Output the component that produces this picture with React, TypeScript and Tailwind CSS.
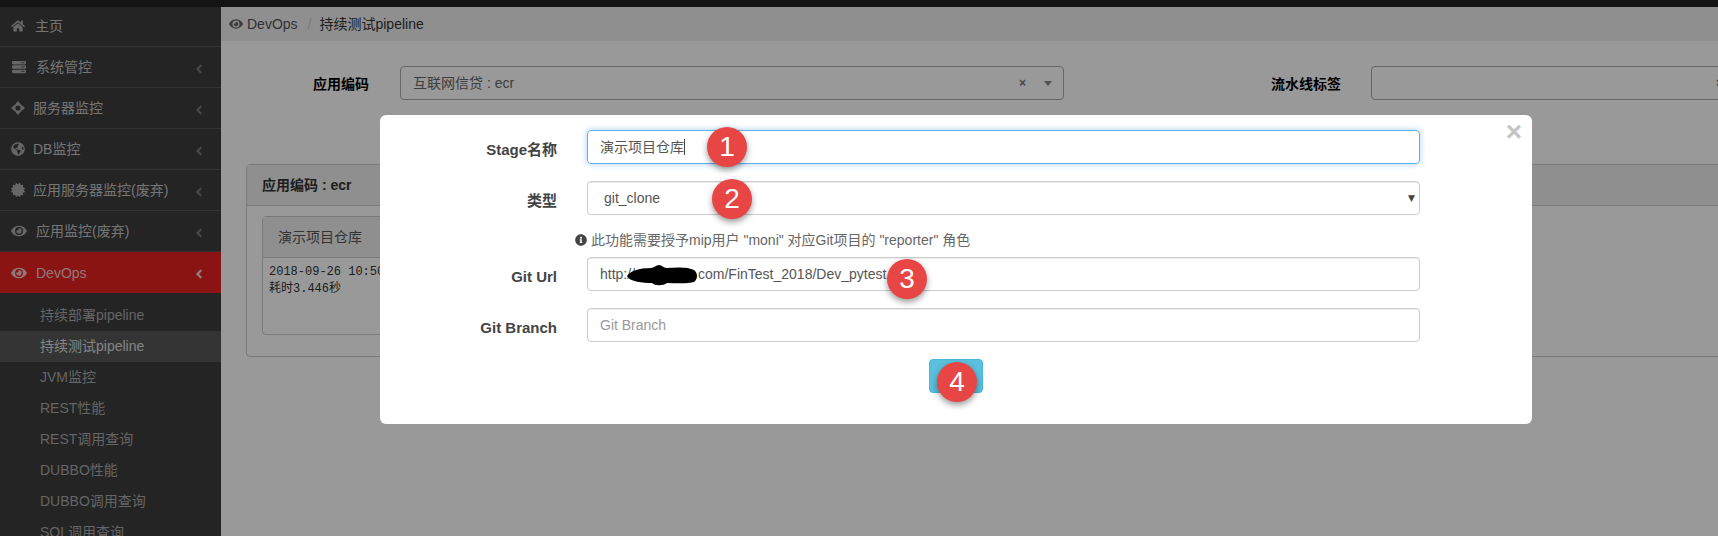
import type { ReactNode } from 'react';
import { FaAngleLeft, FaCertificate, FaEye, FaGlobeAmericas, FaHome, FaInfoCircle, FaServer } from 'react-icons/fa';

const font = 'font-["Liberation_Sans","Noto_Sans_CJK_SC",sans-serif]';

// the "move" glyph of the server item: ring with four points
function MoveIcon() {
    return (
        <svg className="w-[14px] h-[14px]" viewBox="0 0 14 14" fill="currentColor">
            <path d="M7 0 L9.5 3 L4.5 3 Z M7 14 L4.5 11 L9.5 11 Z M0 7 L3 4.5 L3 9.5 Z M14 7 L11 9.5 L11 4.5 Z" />
            <circle cx="7" cy="7" r="3.6" fill="none" stroke="currentColor" strokeWidth="2" />
        </svg>
    );
}

const menu = [
    { label: '主页', icon: <FaHome className="w-[14px] h-[14px]" />, gap: 'ml-[10px]', arrow: false },
    { label: '系统管控', icon: <FaServer className="w-[16px] h-[14px]" />, gap: 'ml-[9px]', arrow: true },
    { label: '服务器监控', icon: <MoveIcon />, gap: 'ml-[8px]', arrow: true },
    { label: 'DB监控', icon: <FaGlobeAmericas className="w-[14px] h-[14px]" />, gap: 'ml-[8px]', arrow: true },
    { label: '应用服务器监控(废弃)', icon: <FaCertificate className="w-[14px] h-[14px]" />, gap: 'ml-[8px]', arrow: true },
    { label: '应用监控(废弃)', icon: <FaEye className="w-[16px] h-[14px]" />, gap: 'ml-[9px]', arrow: true },
];

const subMenu = ['持续部署pipeline', '持续测试pipeline', 'JVM监控', 'REST性能', 'REST调用查询', 'DUBBO性能', 'DUBBO调用查询', 'SQL调用查询'];

function Sidebar() {
    return (
        <aside className="w-[221px] shrink-0 bg-[#3c3c3c] text-sm text-[#c4c4c4]">
            {menu.map((item) => (
                <div key={item.label} className="flex h-[41px] first:h-[40px] items-center pl-[11px] pr-[16px] border-b border-[#555] first:pb-[1px]">
                    <span className="text-[#aaa]">{item.icon}</span>
                    <span className={item.gap}>{item.label}</span>
                    {item.arrow && <FaAngleLeft className="ml-auto mt-[3px] w-[12px] h-[14px] text-[#777]" />}
                </div>
            ))}
            <div className="flex h-[41px] items-center pl-[11px] pr-[16px] bg-[#e62222] text-[#f0c8c8]">
                <FaEye className="w-[16px] h-[14px]" />
                <span className="ml-[9px]">DevOps</span>
                <FaAngleLeft className="ml-auto mt-[3px] w-[12px] h-[14px] text-[#f4d4d4]" />
            </div>
            <ul className="pt-[7px]">
                {subMenu.map((name, i) => (
                    <li key={name} className={`h-[31px] leading-[31px] pl-[40px] ${i === 1 ? 'bg-[#585858] text-[#ddd]' : 'text-[#a8a8a8]'}`}>
                        {name}
                    </li>
                ))}
            </ul>
        </aside>
    );
}

function Content() {
    return (
        <main className="flex-1 min-w-0 overflow-hidden text-sm text-[#444]">
            <div className="flex h-[34px] items-center bg-[#eeeeee] pl-[8px]">
                <FaEye className="w-[14px] h-[14px] text-[#666]" />
                <span className="ml-[4px] text-[#555]">DevOps</span>
                <span className="ml-[10px] text-[#ccc]">/</span>
                <span className="ml-[8px] text-[#333]">持续测试pipeline</span>
            </div>
            <div className="mt-[25px] flex items-center w-[1600px]">
                <label className="w-[148px] pt-[2px] text-right font-bold text-black">应用编码</label>
                <div className="ml-[31px] flex h-[34px] w-[664px] items-center rounded border border-[#aaa] pl-[12px] pr-[11px] text-[#666]">
                    <span>互联网信贷 : ecr</span>
                    <span className="ml-auto text-[#777] font-bold text-xs">×</span>
                    <span className="ml-[18px] h-0 w-0 border-x-[4px] border-t-[5px] border-x-transparent border-t-[#888]"></span>
                </div>
                <label className="w-[277px] pt-[2px] text-right font-bold text-black">流水线标签</label>
                <div className="ml-[30px] flex h-[34px] w-[400px] shrink-0 items-center rounded border border-[#aaa] pl-[344px] text-[#777] font-bold text-xs">×</div>
            </div>
            <section className="mt-[64px] ml-[25px] w-[1500px] rounded border border-[#ccc] h-[193px]">
                <div className="flex h-[41px] items-center bg-[#eeeeee] border-b border-[#ccc] pl-[15px] font-bold text-[#333]">应用编码 : ecr</div>
                <div className="ml-[15px] mt-[10px] w-[240px] h-[119px] rounded border border-[#ccc]">
                    <div className="flex h-[41px] items-center bg-[#eeeeee] border-b border-[#ccc] pl-[15px] text-[#555]">演示项目仓库</div>
                    <pre className='pl-[6px] pt-[6px] text-xs leading-[17px] text-[#333] font-["Liberation_Mono","Noto_Sans_CJK_SC",monospace]'>{'2018-09-26 10:50:21\n耗时3.446秒'}</pre>
                </div>
            </section>
        </main>
    );
}

function Field({ label, children, focused }: { label: string; children: ReactNode; focused?: boolean }) {
    return (
        <div className="flex items-center">
            <label className="w-[177px] pt-[6px] text-right text-[15px] font-bold text-[#444]">{label}</label>
            <div className={`ml-[30px] flex h-[34px] w-[833px] items-center rounded border px-[12px] text-[#555] ${focused ? 'border-[#66afe9] shadow-[0_0_6px_rgba(102,175,233,0.6)]' : 'border-[#ccc] shadow-[inset_0_1px_1px_rgba(0,0,0,0.075)]'}`}>
                {children}
            </div>
        </div>
    );
}

function Badge({ n, className }: { n: number; className: string }) {
    return (
        <span className={`absolute flex h-[40px] w-[40px] items-center justify-center rounded-full bg-[#e84545] text-[28px] text-white shadow-[0_3px_6px_rgba(0,0,0,0.4)] ${className}`}>
            {n}
        </span>
    );
}

function Modal() {
    return (
        <div className="absolute left-[380px] top-[115px] h-[309px] w-[1152px] rounded-md bg-white pt-[15px] text-sm">
            <span className="absolute right-[10px] top-[1px] text-[28px] leading-[32px] font-bold text-[#c4c4c4]">×</span>
            <div className="flex flex-col gap-[17px]">
                <Field label="Stage名称" focused>
                    <span>演示项目仓库</span>
                    <span className="h-[16px] w-px bg-[#444]"></span>
                </Field>
                <Field label="类型">
                    <span className="pl-[4px]">git_clone</span>
                    <span className='ml-auto -mr-[8px] text-[9px] text-[#444] font-["DejaVu_Sans",sans-serif]'>▼</span>
                </Field>
            </div>
            <p className="mt-[16px] flex h-[17px] items-center pl-[195px] text-[#666]">
                <FaInfoCircle className="w-[12px] h-[12px] text-[#444]" />
                <span className="ml-[4px]">此功能需要授予mip用户 "moni" 对应Git项目的 "reporter" 角色</span>
            </p>
            <div className="mt-[9px] flex flex-col gap-[17px]">
                <Field label="Git Url">
                    <span>http://</span>
                    <span className="w-[63px]"></span>
                    <span>com/FinTest_2018/Dev_pytest</span>
                </Field>
                <Field label="Git Branch">
                    <input readOnly placeholder="Git Branch" className="w-full outline-none placeholder:text-[#999]" />
                </Field>
            </div>
            <button className="mt-[17px] ml-[549px] block h-[34px] w-[54px] rounded bg-[#5bc0de] border border-[#46b8da]"></button>

            {/* scribble hiding the host name */}
            <svg className="absolute left-[247px] top-[150px]" width="71" height="21" viewBox="0 0 71 21">
                <path d="M0 11 C3 6 12 3 24 3 C27 3 29 0 32 0 C35 0 36 3 40 3 C50 2 62 2 67 5 C71 8 71 14 67 17 C60 19 50 18 40 18 C36 21 28 21 25 18 C16 18 3 17 0 11 Z" fill="#000" />
            </svg>

            <Badge n={1} className="left-[327px] top-[12px]" />
            <Badge n={2} className="left-[332px] top-[64px]" />
            <Badge n={3} className="left-[507px] top-[144px]" />
            <Badge n={4} className="left-[557px] top-[247px]" />
        </div>
    );
}

export default function App() {
    return (
        <div className={`relative h-screen overflow-hidden bg-white ${font}`}>
            <div className="h-[7px] bg-[#222]"></div>
            <div className="flex h-[529px]">
                <Sidebar />
                <Content />
            </div>
            {/* dimmed backdrop */}
            <div className="absolute inset-0 bg-black/40"></div>
            <Modal />
        </div>
    );
}
